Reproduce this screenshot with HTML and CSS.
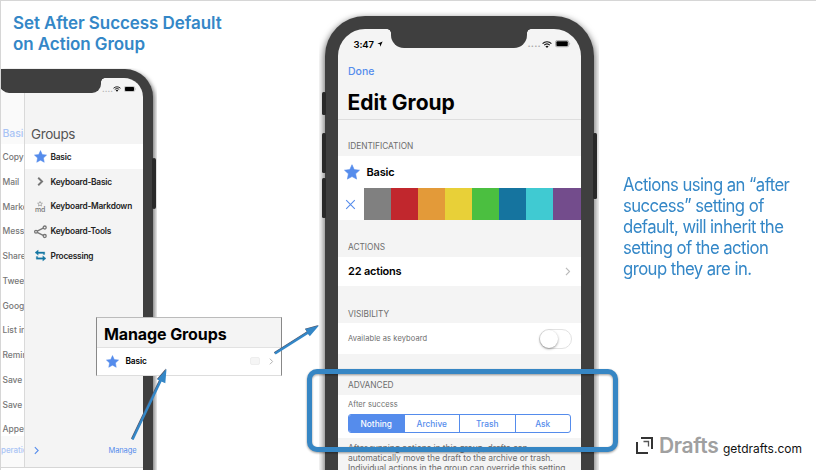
FILE: index.html
```html
<!DOCTYPE html>
<html lang="en">
<head>
<meta charset="utf-8">
<title>Set After Success Default on Action Group</title>
<link rel="stylesheet" href="styles.css">
</head>
<body>
<svg width="0" height="0" class="defs" aria-hidden="true">
  <symbol id="star" viewBox="0 0 16 16"><path d="M8 .7l2.200 4.900 5.300.6-3.900 3.600 1 5.300L8 12.500l-4.600 2.600 1-5.300L.5 6.200l5.300-.6z" fill="#558cec" stroke="#558cec" stroke-width=".6" stroke-linejoin="round"/></symbol>
  <symbol id="wifi" viewBox="0 0 20 14"><g fill="none" stroke="#111" stroke-width="2.300"><path d="M1.200 5.200C6 .3 14 .3 18.800 5.200M4.400 8.400c3.200-3.100 8-3.100 11.200 0"/></g><path d="M10 13.800l-3.200-3.300c1.800-1.500 4.600-1.500 6.400 0z" fill="#111"/></symbol>
  <symbol id="battery" viewBox="0 0 17 8"><rect x=".5" y=".5" width="14" height="7" rx="1.800" fill="#fff" stroke="#aaa"/><rect x="1.400" y="1.400" width="12.200" height="5.200" rx="1"/><path d="M15.500 2.500q1.300 1.500 0 3z" fill="#888"/></symbol>
  <symbol id="chevron" viewBox="0 0 6 10"><path d="M1 1l4 4-4 4" fill="none" stroke="currentColor" stroke-width="1.300"/></symbol>
</svg>
<main class="board">
  <h1 class="title">Set After Success Default<br>on Action Group</h1>

  <section class="phone phone-small">
    <i class="side-key"></i>
    <div class="body">
      <div class="screen">
        <div class="actions-list">
          <b class="crumb">Basic</b>
          <span>Copy</span><span>Mail</span><span>Markdown</span><span>Message</span><span>Share</span><span>Tweet</span><span>Google</span><span>List in</span><span>Reminder</span><span>Save to</span><span>Save to</span><span>Append</span>
          <em>peration</em>
        </div>
        <div class="drawer">
          <div class="status"><span class="dots">....</span><svg class="wifi"><use href="#wifi"/></svg><svg class="battery"><use href="#battery"/></svg></div>
          <h2>Groups</h2>
          <ul>
            <li class="on"><svg><use href="#star"/></svg><span>Basic</span></li>
            <li><svg viewBox="0 0 13 13"><path d="M4.200 2.700l3.900 3.800-3.900 3.800" fill="none" stroke="#777" stroke-width="1.900"/></svg><span>Keyboard-Basic</span></li>
            <li><span class="md"><svg viewBox="0 0 16 16"><path d="M8 1.500l2 4.500 5 .5-3.700 3.300 1 4.900L8 12.100l-4.300 2.600 1-4.900L1 6.500 6 6z" fill="none" stroke="#888" stroke-width="1.800"/></svg><b>md</b></span><span>Keyboard-Markdown</span></li>
            <li><svg viewBox="0 0 13 13"><g fill="none" stroke="#777" stroke-width="1.300"><path d="M3.200 6.200l6-3M3.200 7.400l6 3"/><circle cx="2" cy="6.800" r="1.400"/><circle cx="10.700" cy="2.500" r="1.500"/><circle cx="10.700" cy="11" r="1.500"/></g></svg><span>Keyboard-Tools</span></li>
            <li><svg viewBox="0 0 13 13"><path d="M1 3.600L4.200 1v1.900h6.500v2.600H9.300V4.400H4.200v1.900zM12 9.400L8.800 6.800v1.900H3.700V7.600H2.300v2.600h6.500v1.900z" fill="#1577a3" stroke="#1577a3" stroke-width=".3"/></svg><span>Processing</span></li>
          </ul>
          <footer><svg><use href="#chevron"/></svg><span>Manage</span></footer>
        </div>
        <div class="notch"></div>
      </div>
    </div>
  </section>

  <section class="phone phone-large">
    <i class="key key-a"></i><i class="key key-b"></i><i class="key key-c"></i><i class="key key-d"></i>
    <div class="body">
      <div class="screen">
        <div class="status">
          <span class="time">3:47</span><svg class="loc" viewBox="0 0 8 8"><path d="M.5 3.800L7.500.5 4.300 7.500 3.900 4.200z"/></svg>
          <span class="dots">....</span><svg class="wifi"><use href="#wifi"/></svg><svg class="battery"><use href="#battery"/></svg>
        </div>
        <div class="done"><span>Done</span></div>
        <h2><span>Edit Group</span></h2>
        <h3 class="g1"><span>IDENTIFICATION</span></h3>
        <div class="row name"><svg><use href="#star"/></svg><span>Basic</span></div>
        <div class="swatches"><svg viewBox="0 0 10 10"><path d="M.2.200l9.600 9.600M9.800.2L.2 9.800" stroke="#558cec" stroke-width="1.200"/></svg><i class="c1"></i><i class="c2"></i><i class="c3"></i><i class="c4"></i><i class="c5"></i><i class="c6"></i><i class="c7"></i><i class="c8"></i></div>
        <h3 class="g2"><span>ACTIONS</span></h3>
        <div class="row count"><span>22 actions</span><svg><use href="#chevron"/></svg></div>
        <h3 class="g3"><span>VISIBILITY</span></h3>
        <div class="row avail"><span>Available as keyboard</span><b class="toggle"></b></div>
        <h3 class="g4"><span>ADVANCED</span></h3>
        <div class="after"><span class="label">After success</span>
          <div class="segments"><b class="on">Nothing</b><b>Archive</b><b>Trash</b><b>Ask</b></div>
        </div>
        <p><span>After running actions in this group, drafts can</span><br><span>automatically move the draft to the archive or trash.</span><br><span>Individual actions in the group can override this setting.</span></p>
        <div class="notch"></div>
      </div>
    </div>
  </section>

  <section class="callout">
    <h2><span>Manage Groups</span></h2>
    <div class="entry"><svg class="star"><use href="#star"/></svg><span>Basic</span><i></i><svg class="chev"><use href="#chevron"/></svg></div>
  </section>

  <div class="highlight"></div>

  <p class="note">Actions using an “after<br>success” setting of<br>default, will inherit the<br>setting of the action<br>group they are in.</p>

  <div class="brand">
    <svg viewBox="0 0 17 17"><path d="M5 1h11v11M1 5v11h11" fill="none" stroke="#333" stroke-width="2"/><path d="M7.500 4.500h5v5" fill="none" stroke="#555" stroke-width="1.300"/></svg>
    <strong>Drafts</strong><span>getdrafts.com</span>
  </div>

  <svg class="arrows" viewBox="0 0 816 470">
    <g transform="translate(-.6 -.5)" stroke="#556" fill="#556"><path d="M132.500 439.500L161 380M275 353.500L309 332" stroke-width="2"/><path d="M166.500 369l-9 10.500 7 3.300zM319 325.500l-13.500 3.800 4.300 6.700z" stroke="none"/></g>
    <g stroke="#3487c7" fill="#3487c7"><path d="M132.500 439.500L161 380M275 353.500L309 332" stroke-width="2.400"/><path d="M166.500 369l-9.200 10.500 8 3.700zM319 325.500l-13.700 3.600 4.500 7.200z" stroke="none"/></g>
  </svg>
</main>
</body>
</html>
```
FILE: styles.css
```css
* { box-sizing: border-box; margin: 0; padding: 0; }
body { width: 816px; height: 470px; overflow: hidden; background: #fff; font-family: Inter, "Liberation Sans", sans-serif; }
svg { display: block; flex: none; overflow: visible; }
h1, h2, h3, span, b, em, p { white-space: nowrap; }
i, em { font-style: normal; }
.defs { position: absolute; }
.board { position: relative; width: 816px; height: 470px; overflow: hidden; }
.board::before { content: ""; position: absolute; left: 0; top: 0; width: 815px; height: 469px; border: 1px solid #d6d6d6; }

.title { position: absolute; left: 13px; top: 13px; font-size: 17px; line-height: 21px; font-weight: 600; letter-spacing: -.07px; color: #3487c7; }
.note { position: absolute; left: 623px; top: 174px; font-size: 18px; line-height: 21px; letter-spacing: -.6px; color: #3487c7; transform: scaleX(.928); transform-origin: left; }

.body { position: relative; background: #3f3f3f; overflow: hidden; }
.screen { position: relative; background: #f4f4f4; overflow: hidden; }
.status { display: flex; align-items: center; }
.dots { color: #aaa; font-weight: 700; }
.notch::before, .notch::after { content: ""; position: absolute; top: 1px; width: 4px; height: 4px; }
.notch::before { left: -4px; background: radial-gradient(circle at 0 100%, transparent 3.500px, #3f3f3f 4px); }
.notch::after { right: -4px; background: radial-gradient(circle at 100% 100%, transparent 3.500px, #3f3f3f 4px); }

/* small phone */
.phone-small { position: absolute; left: 1px; top: 68px; width: 156px; height: 402px; overflow: hidden; }
.phone-small .body { width: 151.500px; height: 410px; margin-top: .5px; padding: 9.500px 10px 0 0; border-radius: 0 28px 0 0; overflow: visible; box-shadow: 2px 2px 4px rgba(0,0,0,.5); }
.side-key { position: absolute; z-index: 1; left: 150.500px; top: 90px; width: 4px; height: 51px; border-radius: 2px; background: #292929; }
.phone-small .screen { display: flex; height: 392px; border-radius: 0 19px 0 0; }
.phone-small .screen::after { content: ""; position: absolute; left: 0; right: 0; bottom: 0; height: 2px; background: #fff; border-top: 1px solid #d6d6d6; }
.phone-small .notch { position: absolute; left: -1px; top: -1px; width: 101px; height: 15.500px; background: #3f3f3f; border-radius: 0 0 9px 9px; }
.actions-list { width: 23px; overflow: hidden; background: linear-gradient(#fafafa 66px, #fff 66px, #fff 358px, #fafafa 358px); padding: 48px 0 0 1.500px; display: flex; flex-direction: column; font-size: 8.500px; color: #777; font-weight: 500; letter-spacing: -.05px; }
.actions-list .crumb { height: 19.200px; line-height: 16px; font-size: 10.500px; font-weight: 500; color: #a9c4f5; }
.actions-list span { height: 24.750px; line-height: 24.750px; flex: none; }
.actions-list em { line-height: 18px; margin: -1.500px 0 0 -1.500px; font-size: 8px; color: #a9c4f5; }
.drawer { width: 118.500px; border-left: 1px solid #d9d9d9; display: flex; flex-direction: column; }
.drawer .status { height: 22px; padding: 0 0 0 77px; }
.drawer .dots { width: 11px; font-size: 8px; line-height: 8px; letter-spacing: .1px; }
.drawer .wifi { width: 8px; height: 6px; }
.drawer .battery { width: 12.500px; height: 6px; margin-left: 2.500px; }
.drawer h2 { height: 44px; padding: 24.500px 0 0 6px; font-size: 13.500px; line-height: 18px; font-weight: 400; letter-spacing: -.4px; color: #555; }
.drawer ul { list-style: none; }
.drawer li { display: flex; align-items: center; gap: 4px; height: 24.750px; padding: 1px 0 0 8.500px; font-size: 8.300px; font-weight: 600; color: #222; letter-spacing: -.2px; }
.drawer li.on { background: #fff; }
.drawer li > svg { width: 13px; height: 13px; }
.md { width: 13px; display: flex; flex-direction: column; align-items: center; gap: 1px; }
.md svg { width: 6px; height: 5.500px; }
.md b { font-size: 7px; line-height: 5px; font-weight: 500; letter-spacing: -.2px; color: #777; }
.drawer footer { margin-top: 173px; height: 20px; flex: none; display: flex; align-items: center; justify-content: space-between; padding: 0 6px 0 9px; color: #558cec; font-size: 7.500px; letter-spacing: -.1px; }
.drawer footer svg { width: 5px; height: 9px; }

/* large phone */
.phone-large { position: absolute; left: 319px; top: 10px; width: 280px; height: 460px; overflow: hidden; }
.phone-large .body { margin: 5.500px 0 0 6px; width: 268.500px; height: 480px; padding: 13px 12.500px 0 12.500px; border-radius: 40px 40px 0 0; overflow: visible; box-shadow: 0 3px 7px 1px rgba(0,0,0,.6); }
.key { position: absolute; z-index: 1; left: 2.500px; width: 4px; border-radius: 1.500px; background: #292929; }
.key-a { top: 82px; height: 23px; }
.key-b { top: 123px; height: 40px; }
.key-c { top: 168px; height: 40px; }
.key-d { left: 274px; top: 123px; height: 66px; }
.phone-large .screen { height: 450px; border-radius: 27px 27px 0 0; }
.phone-large .notch { position: absolute; left: 53.500px; top: -1px; width: 136px; height: 20.500px; background: #3f3f3f; border-radius: 0 0 13px 13px; }
.phone-large .status { height: 31px; padding-left: 16px; }
.time { width: 21px; font-size: 9.500px; font-weight: 600; letter-spacing: -.1px; }
.loc { width: 6px; height: 6px; margin-left: 2.500px; }
.phone-large .dots { width: 14px; margin-left: 144.500px; font-size: 9.500px; line-height: 8px; letter-spacing: .2px; }
.phone-large .wifi { width: 10px; height: 7px; }
.phone-large .battery { width: 16px; height: 7.500px; margin-left: 3.500px; }
.done { height: 24px; padding-left: 10.500px; font-size: 10.500px; line-height: 24px; font-weight: 500; color: #558cec; }
.phone-large h2 { height: 36px; padding-left: 10px; font-size: 21px; line-height: 37px; font-weight: 700; letter-spacing: 0; border-bottom: 1px solid #dedede; }
.phone-large h3 { display: flex; flex-direction: column; justify-content: flex-end; padding: 0 0 4.500px 10.500px; font-size: 8.300px; line-height: 10px; font-weight: 400; color: #6d6d6d; }
.g1 { height: 36px; }
.g2 { height: 36.500px; }
.g3 { height: 37px; }
.g4 { height: 40.500px; }
.row { display: flex; align-items: center; background: #fff; }
.name { height: 32.500px; padding-left: 6px; gap: 7px; font-size: 11px; font-weight: 600; letter-spacing: -.2px; }
.name svg { width: 16px; height: 16px; }
.swatches { height: 32px; display: flex; background: #fff; }
.swatches svg { width: 9px; height: 9px; margin: 11.500px 9px 0 8.500px; }
.swatches i { width: 27px; flex: none; }
.c1 { background: #808080; } .c2 { background: #c1272d; } .c3 { background: #e39a39; } .c4 { background: #e8d038; }
.c5 { background: #4bbf40; } .c6 { background: #15749f; } .c7 { background: #40cad2; } .swatches .c8 { width: 28px; background: #734c8c; }
.count { height: 29.500px; padding: 0 11px 0 10.500px; justify-content: space-between; font-size: 11px; font-weight: 600; letter-spacing: -.2px; }
.count svg { width: 5.500px; height: 9px; color: #bbb; }
.avail { height: 31px; padding: 0 9px 0 10.500px; justify-content: space-between; font-size: 7.500px; letter-spacing: .1px; color: #6d6d6d; }
.toggle { width: 33px; height: 20px; border: 1px solid #e2e2e2; border-radius: 10px; }
.toggle::before { content: ""; display: block; width: 18px; height: 18px; border-radius: 50%; background: #fff; box-shadow: 0 1px 2.500px rgba(0,0,0,.4); }
.after { height: 43px; padding: 4.500px 10px 0 10.500px; background: #fff; font-size: 7.500px; letter-spacing: .1px; color: #6d6d6d; }
.label { display: block; line-height: 11px; }
.segments { display: flex; height: 19px; margin-top: 4px; border: 1px solid #558cec; border-radius: 3px; overflow: hidden; letter-spacing: 0; }
.segments b { flex: 1 1 0; text-align: center; font-size: 8.300px; line-height: 18px; font-weight: 500; color: #558cec; }
.segments b + b { border-left: 1px solid #558cec; }
.segments .on { background: #558cec; color: #fff; }
.phone-large p { padding: 5px 0 0 10.500px; font-size: 8.500px; line-height: 10.300px; letter-spacing: -.04px; color: #6d6d6d; }

.callout { position: absolute; left: 96px; top: 317px; width: 186px; height: 58.500px; border: 1px solid #bbb; border-left-color: #888; border-right-color: #888; border-bottom-color: #ddd; background: #fff; }
.callout h2 { height: 30px; padding: 1px 0 0 7px; font-size: 16px; line-height: 30px; font-weight: 700; letter-spacing: -.1px; background: #f4f4f4; border-bottom: 1px solid #e2e2e2; }
.entry { display: flex; align-items: center; height: 26px; padding: 0 7.500px 0 9px; font-size: 8.300px; font-weight: 600; letter-spacing: -.1px; }
.entry .star { width: 13px; height: 13px; margin-right: 6.500px; }
.entry i { width: 10px; height: 8px; margin: 0 9px 0 auto; border: 1px solid #eee; border-radius: 2px; background: #f5f5f5; }
.entry .chev { width: 4.500px; height: 7px; color: #aaa; }

.highlight { position: absolute; left: 306.500px; top: 368.500px; width: 311px; height: 83.500px; border: 5px solid #3686c4; border-radius: 10px; filter: drop-shadow(0 1px 1px rgba(0,0,0,.4)); }
.brand { position: absolute; left: 636px; top: 433px; height: 26px; display: flex; align-items: baseline; }
.brand svg { width: 17px; height: 17px; align-self: flex-start; margin: 4px 6px 0 0; }
.brand strong { width: 64px; font-size: 21px; line-height: 26px; font-weight: 600; letter-spacing: -.35px; color: #a0a0a0; }
.brand span { font-size: 12px; color: #111; }
.arrows { position: absolute; left: 0; top: 0; width: 816px; height: 470px; }
```
